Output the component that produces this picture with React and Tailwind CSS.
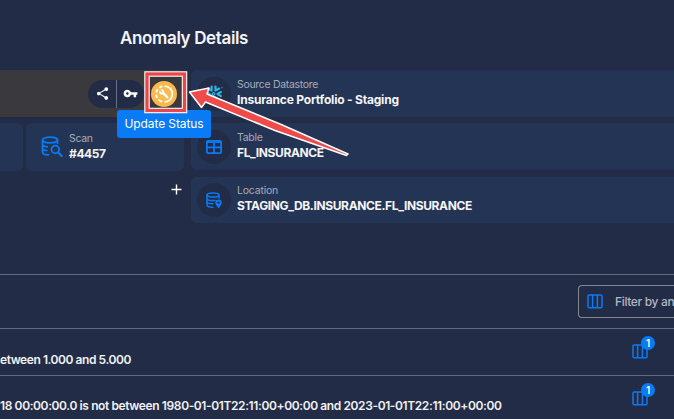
import React from "react";
import { MdShare, MdVpnKey } from "react-icons/md";
import { SiSnowflake } from "react-icons/si";

function ColumnsIcon() {
  return (
    <svg width="16" height="15" viewBox="0 0 16 15" fill="none" stroke="#087bf5" strokeWidth="1.5">
      <rect x="1" y="1" width="14" height="12.8" rx="1.2" />
      <path d="M5.6 1v12.8M10.4 1v12.8" />
    </svg>
  );
}

function DatabaseSearchIcon() {
  return (
    <svg width="22" height="22" viewBox="0 0 22 22" fill="none" stroke="#087bf5" strokeWidth="1.8" strokeLinecap="round">
      <ellipse cx="9" cy="4" rx="7.5" ry="2.8" />
      <path d="M1.5 4v12c0 1.6 2.7 2.8 6 2.8M16.5 4v3.2M1.5 8.2c0 1.3 2 2.3 4.8 2.6M1.5 12.2c0 1.2 1.7 2.1 4.2 2.4" />
      <circle cx="14.3" cy="13.5" r="3.8" />
      <path d="m17.3 16.5 3.4 3.4" strokeWidth="2.1" />
    </svg>
  );
}

function DatabasePinIcon() {
  return (
    <svg width="16" height="17" viewBox="0 0 16 17" fill="none" stroke="#087bf5" strokeWidth="1.5" strokeLinecap="round">
      <ellipse cx="7" cy="3" rx="6" ry="2.1" />
      <path d="M1 3v10c0 1.3 2.4 2.2 5.8 2.3M13 3v3M1 6.4c0 1.3 2.7 2.1 6 2.1.8 0 1.3 0 1.9-.1M1 9.8c0 1.2 2.5 2 5.7 2" />
      <path fill="#087bf5" stroke="none" fillRule="evenodd" d="M12.5 7.4a3.2 3.2 0 0 1 3.2 3.2c0 2.3-3.2 5.8-3.2 5.8s-3.2-3.5-3.2-5.8a3.2 3.2 0 0 1 3.2-3.2m0 2a1.2 1.2 0 1 0 0 2.4 1.2 1.2 0 0 0 0-2.4" />
    </svg>
  );
}

function TableIcon() {
  return (
    <svg width="16" height="14" viewBox="0 0 16 14" fill="none" stroke="#087bf5" strokeWidth="1.8">
      <rect x=".9" y=".9" width="14.2" height="12.2" rx="1" />
      <path d="M1 2.2h14M1 7.3h14M8 2v11" />
    </svg>
  );
}

function StatusIcon() {
  return (
    <svg width="18" height="18" viewBox="0 0 18 18" fill="none" stroke="white" strokeWidth="1.8">
      <path d="M9.5 1.1a7.9 7.9 0 0 1 0 15.8" />
      <path d="M7.4 1.3a7.9 7.9 0 0 0-3.3 1.5M2.8 4.1a7.9 7.9 0 0 0-1.5 3.4M1.2 9.6a7.9 7.9 0 0 0 1.1 3.5M3.5 14.6a7.9 7.9 0 0 0 3.7 2.1" />
      <path d="m8.2 8.2 4 4" strokeWidth="2.5" strokeLinecap="round" />
      <path fill="white" stroke="none" d="M5.4 4.5 7.3 6.4 6.4 7.3 4.5 5.4C3.8 7 4.2 8.6 5.3 9.3c1 .6 2.3.6 3.2-.2.9-.9 1.1-2.2.5-3.3-.8-1.2-2.2-1.7-3.6-1.3" />
    </svg>
  );
}

function InfoCard({ label, value, icon, labelClass, valueClass, className }) {
  return (
    <div className={"flex items-center rounded-l-md bg-[#243455] pl-[6px] " + className}>
      <div className="flex size-[34px] shrink-0 items-center justify-center rounded-full bg-[#232c46]">{icon}</div>
      <div className="ml-[6px] whitespace-nowrap pb-[2px]">
        <div className={"text-[10.5px] leading-[14px] text-[#a6acb9] " + labelClass}>{label}</div>
        <div className={"text-[12px] font-bold leading-[16px] text-[#f4f5f8] " + valueClass}>{value}</div>
      </div>
    </div>
  );
}

function AnomalyRow({ text, className, textClass }) {
  return (
    <div className={"flex justify-between border-t border-[#626a80] " + className}>
      <span className={"whitespace-nowrap text-[12px] font-semibold leading-4 text-[#f0f1f4] " + textClass}>{text}</span>
      <div className="relative mr-[26px] mt-[15px] h-[15px]">
        <ColumnsIcon />
        <span className="absolute -top-[8px] left-[9px] flex size-[14px] items-center justify-center rounded-full bg-[#087bf5] text-[10px] font-semibold text-white">1</span>
      </div>
    </div>
  );
}

export default function App() {
  return (
    <main className="relative flex h-[419px] w-[674px] flex-col overflow-hidden bg-[#232c46] font-['Inter',sans-serif]">
      <header className="h-[70px] shrink-0 pl-[120px] pt-[26px]">
        <h1 className="whitespace-nowrap text-[17px] font-semibold leading-6 tracking-[-0.36px] text-[#f4f5f8]">Anomaly Details</h1>
      </header>

      <section className="flex h-[204px] shrink-0 gap-[7px]">
        <div className="flex w-[184px] shrink-0 flex-col">
          <div className="flex h-[47px] items-center rounded-r-md bg-[#3a393e] pl-[88px]">
            <div className="flex h-7 w-[56px] shrink-0 overflow-hidden rounded-full bg-[#232c46] text-white">
              <button className="flex w-[29px] items-center justify-center border-r border-[#697084]"><MdShare size={15} /></button>
              <button className="flex w-[27px] items-center justify-center"><MdVpnKey size={15} /></button>
            </div>
            <button className="ml-[7px] flex size-[26px] shrink-0 items-center justify-center rounded-full bg-[#fdb94e]"><StatusIcon /></button>
          </div>
          <div className="mt-[6px] flex h-12 gap-[3px]">
            <div className="w-[23px] rounded-r-md bg-[#243455]" />
            <div className="flex flex-1 items-center rounded-md bg-[#243455] pl-[15px]">
              <DatabaseSearchIcon />
              <div className="ml-[6px] pb-px">
                <div className="text-[10.5px] leading-[14px] tracking-[-0.3px] text-[#a6acb9]">Scan</div>
                <div className="text-[12px] font-bold leading-4 tracking-[-0.4px] text-[#f4f5f8]">#4457</div>
              </div>
            </div>
          </div>
          <div className="flex justify-end pr-[2px] pt-[13px]">
            <svg width="11" height="11" viewBox="0 0 11 11" stroke="white" strokeWidth="1.4"><path d="M5.5 .5v10M.5 5.5h10" /></svg>
          </div>
        </div>
        <div className="flex min-w-0 flex-1 flex-col">
          <InfoCard className="h-[47px]" label="Source Datastore" value="Insurance Portfolio - Staging" labelClass="tracking-[-0.31px]" valueClass="tracking-[-0.2px]" icon={<SiSnowflake size={18} color="#29b5e8" />} />
          <InfoCard className="mt-[6px] h-[47px]" label="Table" value="FL_INSURANCE" labelClass="tracking-[-0.3px]" valueClass="tracking-[-0.38px]" icon={<TableIcon />} />
          <InfoCard className="mt-[7px] h-[46px]" label="Location" value="STAGING_DB.INSURANCE.FL_INSURANCE" labelClass="tracking-[-0.2px]" valueClass="tracking-[-0.37px]" icon={<DatabasePinIcon />} />
        </div>
      </section>

      <section className="flex h-[54px] shrink-0 justify-end border-t border-[#626a80] pt-[10px]">
        <div className="flex h-[33px] w-[96px] items-center overflow-hidden rounded-l-[4px] border border-r-0 border-[#858891] pl-[8px]">
          <div className="shrink-0"><ColumnsIcon /></div>
          <span className="ml-[12px] whitespace-nowrap text-[12px] font-medium tracking-[-0.35px] text-[#b2b6c1]">Filter by ano</span>
        </div>
      </section>
      <AnomalyRow className="h-[47px] shrink-0" text="etween 1.000 and 5.000" textClass="mt-[23px] tracking-[-0.44px]" />
      <AnomalyRow className="h-[44px] shrink-0" text="18 00:00:00.0 is not between 1980-01-01T22:11:00+00:00 and 2023-01-01T22:11:00+00:00" textClass="mt-[22px] tracking-[-0.39px]" />

      <div className="absolute left-[117px] top-[110px] flex h-7 w-[94px] items-center justify-center whitespace-nowrap rounded-[3px] bg-[#087bf5] text-[12px] tracking-[-0.1px] text-white">Update Status</div>
      <svg className="absolute left-0 top-0" width="674" height="230" viewBox="0 0 674 230" fill="none">
        <rect x="147" y="74" width="37.5" height="36.5" stroke="white" strokeWidth="5.5" />
        <rect x="147" y="74" width="37.5" height="36.5" stroke="#e9474a" strokeWidth="3.3" />
        <path d="M189.5 92 209 88 207 94 280 124 348 154 346.5 155.5 275 130.5 205.5 102 201.5 107.5Z" fill="#ef4b4b" stroke="white" strokeWidth="1.5" strokeLinejoin="round" />
      </svg>
    </main>
  );
}
